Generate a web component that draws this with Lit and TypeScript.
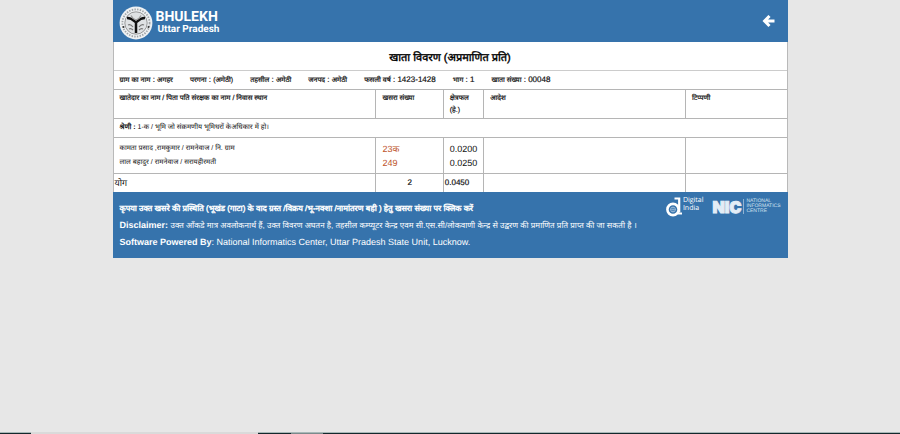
import { LitElement, html, css } from "lit";
import { customElement } from "lit/decorators.js";

interface Field {
  label: string;
  value: string;
  hindi?: boolean;
}

const FIELDS: Field[] = [
  { label: "ग्राम का नाम", value: "अगहर", hindi: true },
  { label: "परगना", value: "(अमेठी)", hindi: true },
  { label: "तहसील", value: "अमेठी", hindi: true },
  { label: "जनपद", value: "अमेठी", hindi: true },
  { label: "फसली वर्ष", value: "1423-1428" },
  { label: "भाग", value: "1" },
  { label: "खाता संख्या", value: "00048" },
];

@customElement("state-emblem")
export class StateEmblem extends LitElement {
  static styles = css`
    :host { display: block; width: 34px; height: 34px; }
    svg { display: block; width: 100%; height: 100%; }
  `;

  render() {
    return html`
      <svg viewBox="0 0 34 34" role="img" aria-label="Uttar Pradesh">
        <circle cx="17" cy="17" r="16.4" fill="#eef1f3" />
        <circle cx="17" cy="17" r="13.6" fill="none" stroke="#6d7174" stroke-width="1.8" stroke-dasharray="1.4 1.3" opacity=".6" />
        <circle cx="17" cy="17" r="11.2" fill="#dfe2e4" stroke="#777" stroke-width=".7" />
        <path d="M8 12c4.500-.2 6.500 2.300 9 4.500 2.500-2.200 4.500-4.700 9-4.500M17 16V27" fill="none" stroke="#111" stroke-width="2.500" />
        <path d="M12 9.500c1 2.500 2.500 3.500 5 4.500 2.500-1 4-2 5-4.500" fill="none" stroke="#999" stroke-width="1.200" />
        <path d="M9 19c2-1 3.500 0 5 2M25 19c-2-1-3.500 0-5 2M10 23c2-1 3 0 4 1M24 23c-2-1-3 0-4 1" fill="none" stroke="#777" stroke-width="1.200" />
        <circle cx="4.500" cy="21" r="1" fill="#333" />
        <circle cx="29.500" cy="21" r="1" fill="#333" />
      </svg>
    `;
  }
}

@customElement("app-root")
export class AppRoot extends LitElement {
  static styles = css`
    :host {
      display: flex;
      flex-direction: column;
      min-height: 100vh;
      background: #e7e7e7;
      color: #111;
      font-family: "Liberation Sans", sans-serif;
      font-size: 8px;
      line-height: 12px;
      text-rendering: geometricPrecision;
    }
    .page { width: 75%; margin: 0 auto; flex: 1; }
    header {
      display: flex;
      align-items: center;
      box-sizing: border-box;
      height: 42px;
      padding: 4px 13px 0 6px;
      background: #3673ac;
      color: #fff;
    }
    .brand { margin: 0 auto 0 3px; font-family: Roboto, sans-serif; font-weight: bold; }
    .name { font-size: 14px; line-height: 14px; }
    .state { padding-left: 2px; font-size: 10px; line-height: 12px; }
    .back { padding: 0; border: 0; background: none; color: inherit; line-height: 0; }
    .sheet { background: #fff; border: solid #b9b9b9; border-width: 0 1px; }
    h1 {
      margin: 0;
      height: 28px;
      font-size: 11px;
      line-height: 32px;
      text-align: center;
      color: #000;
      font-weight: normal;
      -webkit-text-stroke: 0.4px currentColor;
    }
    .hi { font-size: 7px; }
    .fields {
      display: flex;
      align-items: center;
      gap: 17px;
      height: 18px;
      padding: 0 6px;
      border-top: 1px solid #ccc;
      white-space: nowrap;
      -webkit-text-stroke: 0.2px currentColor;
    }
    table { width: 100%; border-collapse: collapse; table-layout: fixed; }
    th, td {
      box-sizing: border-box;
      padding: 0 6px;
      border: 1px solid #b5b5b5;
      text-align: left;
      vertical-align: middle;
      font-weight: normal;
      white-space: nowrap;
    }
    tr > :first-child { border-left: 0; }
    tr > :last-child { border-right: 0; }
    th {
      height: 29px;
      padding-top: 3px;
      vertical-align: top;
      font-size: 7px;
      -webkit-text-stroke: 0.2px currentColor;
    }
    .c-name { width: 39%; }
    .c-plot { width: 10%; }
    .c-area { width: 6%; }
    .c-order { width: 30%; }
    .class-row td { height: 19px; }
    .owners td { height: 36px; font-size: 7px; line-height: 14px; }
    .owners .num { font-size: 9px; }
    .total td { height: 18px; border-bottom: 0; }
    .total .label { padding: 0 1px; font-size: 9px; }
    .total .count { text-align: center; -webkit-text-stroke: 0.2px currentColor; }
    .total .sum { padding: 0 1px; -webkit-text-stroke: 0.2px currentColor; }
    .plot { display: block; color: #bd5429; text-decoration: none; }
    footer {
      display: flex;
      justify-content: space-between;
      box-sizing: border-box;
      min-height: 66px;
      padding: 4px 7px 8px;
      background: #3673ac;
      color: #fff;
      font-size: 9px;
      line-height: 16px;
    }
    footer p { margin: 0; white-space: nowrap; }
    .notes { padding-top: 4px; width: 0; flex: 1; }
    .request { font-size: 8px; font-weight: normal; -webkit-text-stroke: 0.4px currentColor; }
    .terms { font-size: 8px; }
    .logos { display: flex; align-items: flex-start; height: 24px; }
    .logos svg { display: block; }
    .digital { margin-left: 1px; font: 7px/8px "Open Sans", sans-serif; padding-top: 1px; }
    .nic {
      margin-left: 9px;
      padding: 3px 2px 0 0;
      font: 900 16px/16px Inter, sans-serif;
      color: #e3edf6;
      -webkit-text-stroke: 1px #e3edf6;
    }
    .centre {
      margin-top: 3px;
      padding-left: 2px;
      border-left: 1px solid #8fb2d3;
      font: 5px/5px "Liberation Sans", sans-serif;
      color: #d5e3f0;
    }
    .taskbar { display: flex; height: 1px; border-top: 1px solid #a9b8b8; background: #13282c; }
    .search { width: 227px; margin-left: 31px; margin-top: -1px; height: 2px; background: #dadada; }
    .active { width: 32px; margin-left: 33px; height: 1px; background: #7b8b8c; }
  `;

  render() {
    return html`
      <div class="page">
        <header>
          <state-emblem></state-emblem>
          <div class="brand">
            <div class="name">BHULEKH</div>
            <div class="state">Uttar Pradesh</div>
          </div>
          <button class="back" aria-label="Back">
            <svg width="13" height="16" viewBox="0 0 13 16" fill="none" stroke="#fff" stroke-width="3">
              <path d="M7.500 1 2.600 6l4.900 5M3 6h9.500" />
            </svg>
          </button>
        </header>
        <main class="sheet">
          <h1>खाता विवरण (अप्रमाणित प्रति)</h1>
          <div class="fields">
            ${FIELDS.map((f) => html`<span><span class="hi">${f.label}</span> : <span class=${f.hindi ? "hi" : ""}>${f.value}</span></span>`)}
          </div>
          <table>
            <colgroup>
              <col class="c-name" /><col class="c-plot" /><col class="c-area" /><col class="c-order" /><col />
            </colgroup>
            <thead>
              <tr>
                <th>खातेदार का नाम / पिता पति संरक्षक का नाम / निवास स्थान</th>
                <th>खसरा संख्या</th>
                <th>क्षेत्रफल<br />(हे.)</th>
                <th>आदेश</th>
                <th>टिप्पणी</th>
              </tr>
            </thead>
            <tbody>
              <tr class="class-row">
                <td colspan="5" class="hi"><b>श्रेणी :</b> 1-क / भूमि जो संक्रमणीय भूमिधरों केअधिकार में हो।</td>
              </tr>
              <tr class="owners">
                <td>कामता प्रसाद ,रामकुमार / रामनेवाज / नि. ग्राम<br />लाल बहादुर / रामनेवाज / सरायहीरमती</td>
                <td class="num"><a class="plot" href="#23">23क</a><a class="plot" href="#249">249</a></td>
                <td class="num">0.0200<br />0.0250</td>
                <td></td>
                <td></td>
              </tr>
              <tr class="total">
                <td class="label">योग</td>
                <td class="count">2</td>
                <td class="sum">0.0450</td>
                <td></td>
                <td></td>
              </tr>
            </tbody>
          </table>
        </main>
        <footer>
          <div class="notes">
            <p><b class="request">कृपया उक्त खसरे की प्रस्थिति (भूखंड (गाटा) के वाद ग्रस्त /विक्रय /भू-नक्शा /नामांतरण बही ) हेतु खसरा संख्या पर क्लिक करें</b></p>
            <p><b>Disclaimer:</b> <span class="terms">उक्त आँकडे मात्र अवलोकनार्थ हैं, उक्त विवरण अघतन है, तहसील कम्प्यूटर केन्द्र एवम सी.एस.सी/लोकवाणी केन्द्र से उद्वरण की प्रमाणित प्रति प्राप्त की जा सकती है ।</span></p>
            <p><b>Software Powered By</b>: National Informatics Center, Uttar Pradesh State Unit, Lucknow.</p>
          </div>
          <div class="logos">
            <svg width="16" height="22" viewBox="0 0 16 22" fill="none" stroke="#fff">
              <circle cx="7" cy="13.500" r="5.600" stroke-width="2.600" />
              <path d="M8.500 2.500h4.700v14" stroke-width="2.200" />
              <path d="M12 17.500h4" stroke-width="2" />
              <circle cx="7" cy="13.500" r="2.400" stroke="#b5cce2" stroke-width=".8" />
              <path d="M7 11v5M4.500 13.500h5" stroke="#b5cce2" stroke-width=".5" />
            </svg>
            <div class="digital">Digital<br />India</div>
            <div class="nic">NIC</div>
            <div class="centre">NATIONAL<br />INFORMATICS<br />CENTRE</div>
          </div>
        </footer>
      </div>
      <div class="taskbar"><div class="search"></div><div class="active"></div></div>
    `;
  }
}
